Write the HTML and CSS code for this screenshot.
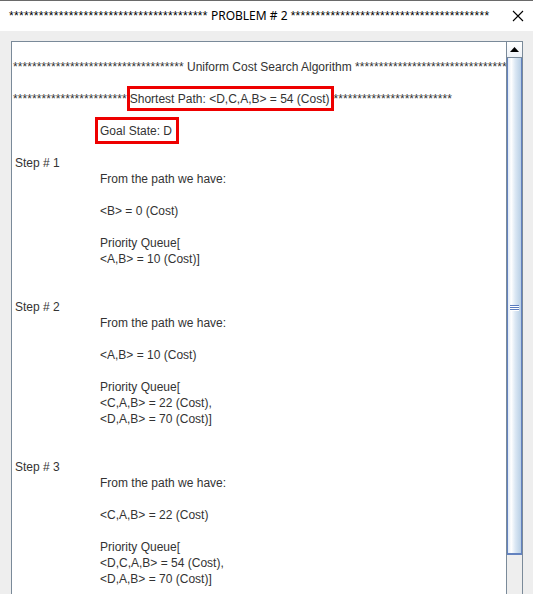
FILE: index.html
```html
<!DOCTYPE html>
<html>
<head>
<meta charset="utf-8">
<link rel="stylesheet" href="styles.css">
</head>
<body>
<div class="window">
  <div class="titlebar">
    <div class="title"><span class="tstars">****************************************</span> PROBLEM # 2 <span class="tstars">****************************************</span></div>
    <svg class="close" width="12" height="12" viewBox="0 0 12 12"><path d="M1 1 L11 11 M11 1 L1 11" stroke="#000" stroke-width="1.1" fill="none"/></svg>
  </div>
  <div class="client">
    <div class="pane">
      <div class="doc">
        <div class="ln banner"><span class="stars">************************************</span> Uniform Cost Search Algorithm <span class="stars">****************************************</span></div>
        <div class="ln banner"><span class="stars">************************</span><span class="mark">Shortest Path: &lt;D,C,A,B&gt; = 54 (Cost)</span><span class="stars">*************************</span></div>
        <div class="ln goal"><span class="mark goal-mark">Goal State: D</span></div>

        <section class="step">
          <div class="ln step-title">Step # 1</div>
          <div class="ln ind">From the path we have:</div>
          <div class="ln ind sp">&lt;B&gt; = 0 (Cost)</div>
          <div class="ln ind sp">Priority Queue[</div>
          <div class="ln ind">&lt;A,B&gt; = 10 (Cost)]</div>
        </section>

        <section class="step">
          <div class="ln step-title">Step # 2</div>
          <div class="ln ind">From the path we have:</div>
          <div class="ln ind sp">&lt;A,B&gt; = 10 (Cost)</div>
          <div class="ln ind sp">Priority Queue[</div>
          <div class="ln ind">&lt;C,A,B&gt; = 22 (Cost),</div>
          <div class="ln ind">&lt;D,A,B&gt; = 70 (Cost)]</div>
        </section>

        <section class="step">
          <div class="ln step-title">Step # 3</div>
          <div class="ln ind">From the path we have:</div>
          <div class="ln ind sp">&lt;C,A,B&gt; = 22 (Cost)</div>
          <div class="ln ind sp">Priority Queue[</div>
          <div class="ln ind">&lt;D,C,A,B&gt; = 54 (Cost),</div>
          <div class="ln ind">&lt;D,A,B&gt; = 70 (Cost)]</div>
        </section>
      </div>
      <div class="vscroll">
        <div class="sb-up"><svg width="9" height="5" viewBox="0 0 9 5"><path d="M4.5 0 L9 5 L0 5 Z" fill="#000"/></svg></div>
        <div class="sb-thumb">
          <div class="grip"><span></span><span></span><span></span></div>
        </div>
        <div class="sb-track"></div>
      </div>
    </div>
  </div>
</div>
</body>
</html>
```

FILE: styles.css
```css
html, body {
  margin: 0;
  padding: 0;
  width: 533px;
  height: 594px;
  overflow: hidden;
  background: #eeeeee;
}

.window {
  display: flex;
  flex-direction: column;
  height: 594px;
}

.titlebar {
  height: 30px;
  border-top: 1px solid #6a6a6a;
  background: #ffffff;
  display: flex;
  align-items: center;
  justify-content: space-between;
  padding: 0 9px 0 9px;
  flex: none;
}

.title {
  font-family: "Noto Sans", "Open Sans", sans-serif;
  font-size: 12px;
  color: #000;
  white-space: pre;
  line-height: 16px;
}

.tstars {
  font-family: "Liberation Sans", Arial, sans-serif;
  letter-spacing: 0.3px;
}

.close {
  display: block;
}

.client {
  flex: 1;
  padding: 10px 10px 0 11px;
  min-height: 0;
}

.pane {
  width: 510px;
  height: 580px;
  border: 1px solid #7a8a99;
  background: #ffffff;
  display: flex;
}

.doc {
  flex: 1;
  min-width: 0;
  overflow: hidden;
  padding: 17px 0 0 1px;
  font-family: "Liberation Sans", Arial, sans-serif;
  font-size: 12px;
  color: #333333;
}

.ln {
  line-height: 16px;
  height: 16px;
  white-space: pre;
}

.stars {
  letter-spacing: 0.07px;
}

.banner,
.goal {
  margin-bottom: 16px;
}

.mark {
  border: 3px solid #ee0000;
  padding: 3px 1px 2px 0;
}

.goal-mark {
  margin-left: 82px;
  padding: 4px 4px 3px 2px;
}

.step {
  margin-bottom: 32px;
}

.step-title {
  padding-left: 2px;
}

.ind {
  padding-left: 87px;
}

.sp {
  margin-top: 16px;
}

.vscroll {
  width: 15px;
  flex: none;
  border-left: 1px solid #7a8a99;
  display: flex;
  flex-direction: column;
  background: #eeeeee;
}

.sb-up {
  height: 15px;
  border-bottom: 1px solid #7a8a99;
  background: linear-gradient(to bottom, #ffffff, #eef2f7);
  display: flex;
  align-items: center;
  justify-content: center;
  flex: none;
}

.sb-up svg {
  display: block;
  margin-top: -1px;
}

.sb-thumb {
  height: 496px;
  flex: none;
  box-sizing: border-box;
  border: 1px solid #6382bf;
  border-top: none;
  background: linear-gradient(to right, #dfe9f5 0%, #ffffff 25%, #dce8f4 55%, #b8cfe5 100%);
  display: flex;
  align-items: center;
  justify-content: center;
}

.grip {
  display: flex;
  flex-direction: column;
  gap: 1px;
  margin-top: 4px;
}

.grip span {
  display: block;
  width: 9px;
  height: 1px;
  background: #5a7cc0;
  border-bottom: 1px solid #ffffff;
  margin-bottom: -1px;
}

.sb-track {
  flex: 1;
  border-top: 1px solid #6382bf;
  background: #eeeeee;
}
```
